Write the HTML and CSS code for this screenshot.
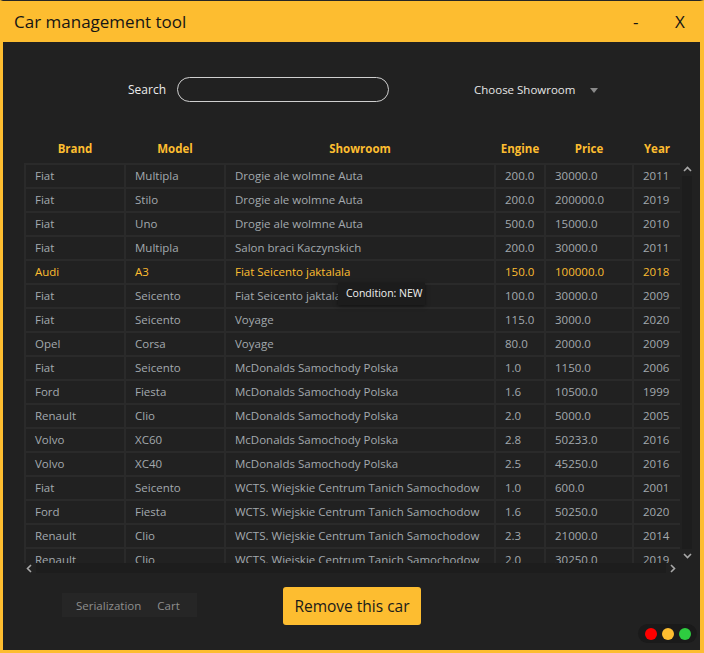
FILE: index.html
```html
<!DOCTYPE html>
<html>
<head>
<meta charset="utf-8">
<link rel="stylesheet" href="styles.css">
</head>
<body>
<div class="window">
  <header class="titlebar">
    <span class="title">Car management tool</span>
    <span class="win-min">-</span>
    <span class="win-close">X</span>
  </header>
  <main class="content">
    <div class="toolbar">
      <span class="search-label">Search</span>
      <input class="search-input" type="text">
      <div class="dropdown">
        <span class="dropdown-text">Choose Showroom</span>
        <svg class="caret" width="8" height="5" viewBox="0 0 8 5"><path d="M0 0H8L4 5Z" fill="#8a8a8a"/></svg>
      </div>
    </div>

    <div class="table-area">
      <div class="thead">
        <div>Brand</div><div>Model</div><div>Showroom</div><div>Engine</div><div>Price</div><div>Year</div>
      </div>
      <div class="viewport">
        <div class="tbody">
          <div>Fiat</div><div>Multipla</div><div>Drogie ale wolmne Auta</div><div>200.0</div><div>30000.0</div><div>2011</div>
          <div>Fiat</div><div>Stilo</div><div>Drogie ale wolmne Auta</div><div>200.0</div><div>200000.0</div><div>2019</div>
          <div>Fiat</div><div>Uno</div><div>Drogie ale wolmne Auta</div><div>500.0</div><div>15000.0</div><div>2010</div>
          <div>Fiat</div><div>Multipla</div><div>Salon braci Kaczynskich</div><div>200.0</div><div>30000.0</div><div>2011</div>
          <div class="sel">Audi</div><div class="sel">A3</div><div class="sel">Fiat Seicento jaktalala</div><div class="sel">150.0</div><div class="sel">100000.0</div><div class="sel">2018</div>
          <div>Fiat</div><div>Seicento</div><div>Fiat Seicento jaktalala</div><div>100.0</div><div>30000.0</div><div>2009</div>
          <div>Fiat</div><div>Seicento</div><div>Voyage</div><div>115.0</div><div>3000.0</div><div>2020</div>
          <div>Opel</div><div>Corsa</div><div>Voyage</div><div>80.0</div><div>2000.0</div><div>2009</div>
          <div>Fiat</div><div>Seicento</div><div>McDonalds Samochody Polska</div><div>1.0</div><div>1150.0</div><div>2006</div>
          <div>Ford</div><div>Fiesta</div><div>McDonalds Samochody Polska</div><div>1.6</div><div>10500.0</div><div>1999</div>
          <div>Renault</div><div>Clio</div><div>McDonalds Samochody Polska</div><div>2.0</div><div>5000.0</div><div>2005</div>
          <div>Volvo</div><div>XC60</div><div>McDonalds Samochody Polska</div><div>2.8</div><div>50233.0</div><div>2016</div>
          <div>Volvo</div><div>XC40</div><div>McDonalds Samochody Polska</div><div>2.5</div><div>45250.0</div><div>2016</div>
          <div>Fiat</div><div>Seicento</div><div>WCTS. Wiejskie Centrum Tanich Samochodow</div><div>1.0</div><div>600.0</div><div>2001</div>
          <div>Ford</div><div>Fiesta</div><div>WCTS. Wiejskie Centrum Tanich Samochodow</div><div>1.6</div><div>50250.0</div><div>2020</div>
          <div>Renault</div><div>Clio</div><div>WCTS. Wiejskie Centrum Tanich Samochodow</div><div>2.3</div><div>21000.0</div><div>2014</div>
          <div>Renault</div><div>Clio</div><div>WCTS. Wiejskie Centrum Tanich Samochodow</div><div>2.0</div><div>30250.0</div><div>2019</div>
        </div>
        <div class="tooltip">Condition: NEW</div>
      </div>
      <div class="vscroll">
        <svg width="9" height="6" viewBox="0 0 9 6"><path d="M1 5L4.5 1.5L8 5" stroke="#a8a8a8" stroke-width="1.6" fill="none"/></svg>
        <div class="vtrack"></div>
        <svg width="9" height="6" viewBox="0 0 9 6"><path d="M1 1L4.5 4.5L8 1" stroke="#a8a8a8" stroke-width="1.6" fill="none"/></svg>
      </div>
      <div class="hscroll">
        <svg width="6" height="9" viewBox="0 0 6 9"><path d="M5 1L1.5 4.5L5 8" stroke="#a8a8a8" stroke-width="1.6" fill="none"/></svg>
        <div class="htrack"></div>
        <svg width="6" height="9" viewBox="0 0 6 9"><path d="M1 1L4.5 4.5L1 8" stroke="#a8a8a8" stroke-width="1.6" fill="none"/></svg>
      </div>
    </div>

    <div class="bottom">
      <div class="tabs">
        <span>Serialization</span>
        <span>Cart</span>
      </div>
      <button class="remove-btn">Remove this car</button>
      <div class="lights">
        <span class="dot red"></span>
        <span class="dot amber"></span>
        <span class="dot green"></span>
      </div>
    </div>
  </main>
</div>
</body>
</html>
```

FILE: styles.css
```css
* { box-sizing: border-box; }

html, body {
  margin: 0;
  padding: 0;
  background: #212121;
}

body {
  font-family: "Open Sans", "Noto Sans", sans-serif;
}

.window {
  width: 704px;
  height: 653px;
  display: flex;
  flex-direction: column;
  background: #212121;
  border-top: 1px solid #262626;
  border-left: 3px solid #fdbd30;
  border-right: 4px solid #fdbd30;
  border-bottom: 3px solid #fdbd30;
  overflow: hidden;
}

.titlebar {
  height: 41px;
  flex: none;
  background: #fdbd30;
  display: flex;
  align-items: center;
  padding-left: 11px;
  color: #151515;
  font-size: 17px;
}

.title {
  flex: 1;
  margin-top: -1px;
}

.win-min {
  width: 42px;
  margin-top: -1px;
}

.win-close {
  width: 25px;
  margin-top: -1px;
}

.content {
  flex: 1;
  display: flex;
  flex-direction: column;
}

.toolbar {
  display: flex;
  align-items: center;
  height: 25px;
  margin-top: 35px;
  padding-left: 125px;
}

.search-label {
  color: #ececec;
  font-size: 12px;
  width: 49px;
}

.search-input {
  width: 212px;
  height: 25px;
  border: 1.5px solid #cfcfcf;
  border-radius: 13px;
  background: transparent;
  outline: none;
  padding: 0 10px;
  color: #eee;
}

.dropdown {
  display: flex;
  align-items: center;
  margin-left: 85px;
}

.dropdown-text {
  color: #e6e6e6;
  font-size: 11.5px;
  width: 116px;
}

.caret {
  margin-top: 1px;
}

.table-area {
  margin-top: 36px;
  margin-left: 21px;
  display: grid;
  grid-template-columns: 656px 12px;
  grid-template-rows: 25px 400px 10px;
  grid-template-areas:
    "head ."
    "body vs"
    "hs hs";
}

.thead {
  grid-area: head;
  display: grid;
  grid-template-columns: 98px 98px 268px 48px 86px 46px;
  column-gap: 2px;
  padding-left: 2px;
  color: #fdbd30;
  font-weight: 700;
  font-size: 11.5px;
  text-align: center;
  line-height: 21px;
}

.viewport {
  grid-area: body;
  position: relative;
  overflow: hidden;
  background: #2a2a2a;
}

.tbody {
  display: grid;
  grid-template-columns: 98px 98px 268px 48px 86px 46px;
  grid-auto-rows: 22px;
  gap: 2px;
  padding: 2px 0 0 2px;
}

.tbody > div {
  background: #212121;
  color: #a3a9ae;
  font-size: 11.5px;
  line-height: 22px;
  padding-left: 9px;
  white-space: nowrap;
  overflow: hidden;
}

.tbody > div.sel {
  color: #fdbd30;
}

.tooltip {
  position: absolute;
  left: 314px;
  top: 120px;
  width: 87px;
  height: 22px;
  background: #1c1c1c;
  color: #f0f0f0;
  font-size: 10.5px;
  line-height: 21px;
  padding-left: 8px;
  box-shadow: 0 1px 4px rgba(0, 0, 0, 0.5);
}

.vscroll {
  grid-area: vs;
  margin-left: 2px;
  display: flex;
  flex-direction: column;
  align-items: center;
  padding: 3px 0 4px;
}

.vtrack {
  flex: 1;
  width: 10px;
  margin: 4px 0;
  background: #1d1d1d;
}

.hscroll {
  grid-area: hs;
  display: flex;
  align-items: center;
  padding: 0 16px 0 2px;
}

.htrack {
  flex: 1;
  height: 10px;
  margin: 0 4px;
  background: #1d1d1d;
}

.bottom {
  flex: 1;
  display: flex;
  align-items: flex-start;
  padding-left: 59px;
}

.tabs {
  margin-top: 20px;
  width: 135px;
  height: 24px;
  background: #262626;
  display: flex;
  align-items: center;
  padding-left: 14px;
  gap: 16px;
  color: #8e8e8e;
  font-size: 11.5px;
}

.remove-btn {
  margin-top: 14px;
  margin-left: 86px;
  width: 138px;
  height: 38px;
  border: none;
  border-radius: 3px;
  background: #fdbd30;
  color: #1a1a1a;
  font-family: "Open Sans", "Noto Sans", sans-serif;
  font-size: 15.5px;
  padding: 0;
}

.lights {
  margin-top: 51px;
  margin-left: auto;
  margin-right: 3px;
  height: 19px;
  width: 59px;
  border-radius: 10px;
  background: #1a1a1a;
  display: flex;
  align-items: center;
  justify-content: center;
  gap: 5px;
}

.dot {
  width: 12px;
  height: 12px;
  border-radius: 50%;
}

.red { background: #ff0000; }
.amber { background: #fdbd30; }
.green { background: #2ecc40; }
```
